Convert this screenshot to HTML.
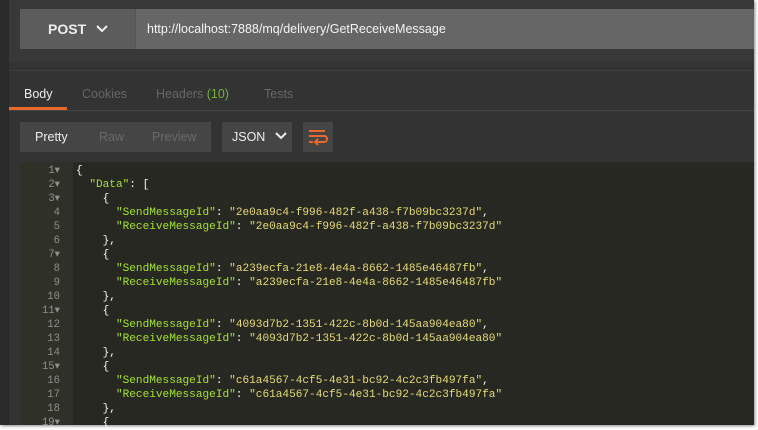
<!DOCTYPE html><html><head><style>
*{margin:0;padding:0;box-sizing:border-box}
body{width:758px;height:428px;background:#fff;position:relative;overflow:hidden;font-family:"Liberation Sans",sans-serif}
.main{position:absolute;left:0;top:0;width:754px;height:425px;background:#333;box-shadow:1px 1px 3px #888}
.strip{position:absolute;left:0;top:0;width:9px;height:425px;background:#2a2a2a}
.top{position:absolute;left:9px;top:0;width:745px;height:62px;background:#383838}
.method{position:absolute;left:20px;top:9px;width:115px;height:40px;background:#5c5c5c;color:#eee;font-weight:bold;font-size:14px;line-height:40px;padding-left:28px}
.url{position:absolute;left:135px;top:9px;width:619px;height:40px;background:#666;border-left:1px solid #555;color:#f4f4f4;font-size:12.5px;line-height:40px;padding-left:11px}
.tabs{position:absolute;left:9px;top:70px;width:745px;height:41px;border-top:1px solid #3d3d3d;border-bottom:1px solid #444;font-size:12.5px}
.tabs span{position:absolute;top:16px;color:#666}
.ul{position:absolute;left:9px;top:107px;width:58px;height:3px;background:#e8692c}
.btns{position:absolute;left:20px;top:122px;width:191px;height:30px;background:#454545;font-size:12.5px;line-height:30px}
.btns span{position:absolute;color:#6a6a6a}
.json{position:absolute;left:222px;top:122px;width:70px;height:30px;background:#454545;color:#eee;font-size:12.5px;line-height:30px;padding-left:10px}
.wrap{position:absolute;left:303px;top:122px;width:30px;height:30px;background:#454545}
.ed{position:absolute;left:20px;top:162px;width:734px;height:263px;background:#272822}
.gut{position:absolute;left:0;top:0;width:53px;height:263px;background:#2f3129}
pre{position:absolute;top:2px;font-family:"Liberation Mono",monospace;font-size:11.1px;line-height:14px}
.ln{left:0;width:40px;text-align:right;color:#8f908a;font-size:10.6px}
.code{left:56px;color:#f8f8f2}
.k{color:#a6e22e}.s{color:#e6db74}
</style></head><body>
<div class="main">
<div class="strip"></div><div class="top"></div>
<div class="method">POST <svg width="12" height="8" style="margin-left:6px;vertical-align:1px"><path d="M1 1L6 6L11 1" stroke="#eee" stroke-width="2" fill="none"/></svg></div>
<div class="url">http://localhost:7888/mq/delivery/GetReceiveMessage</div>
<div class="tabs"><span style="left:15px;color:#eee">Body</span><span style="left:73px">Cookies</span><span style="left:147px">Headers <b style="color:#71b43a;font-weight:normal">(10)</b></span><span style="left:255px">Tests</span></div>
<div class="ul"></div>
<div class="btns"><span style="left:15px;color:#eee">Pretty</span><span style="left:79px">Raw</span><span style="left:132px">Preview</span></div>
<div class="json">JSON <svg width="12" height="8" style="margin-left:6px;vertical-align:1px"><path d="M1 1L6 6L11 1" stroke="#eee" stroke-width="2" fill="none"/></svg></div>
<div class="wrap"><svg width="30" height="30"><path d="M6 9H22M6 14H21a3 3 0 0 1 0 6H13M6 20H10M15 17L12 20L15 23" stroke="#e8692c" stroke-width="2" fill="none"/></svg></div>
<div class="ed"><div class="gut"></div>
<pre class="ln">1▾
2▾
3▾
4
5
6
7▾
8
9
10
11▾
12
13
14
15▾
16
17
18
19▾</pre>
<pre class="code">{
  <span class="k">"Data"</span>: [
    {
      <span class="k">"SendMessageId"</span>: <span class="s">"2e0aa9c4-f996-482f-a438-f7b09bc3237d"</span>,
      <span class="k">"ReceiveMessageId"</span>: <span class="s">"2e0aa9c4-f996-482f-a438-f7b09bc3237d"</span>
    },
    {
      <span class="k">"SendMessageId"</span>: <span class="s">"a239ecfa-21e8-4e4a-8662-1485e46487fb"</span>,
      <span class="k">"ReceiveMessageId"</span>: <span class="s">"a239ecfa-21e8-4e4a-8662-1485e46487fb"</span>
    },
    {
      <span class="k">"SendMessageId"</span>: <span class="s">"4093d7b2-1351-422c-8b0d-145aa904ea80"</span>,
      <span class="k">"ReceiveMessageId"</span>: <span class="s">"4093d7b2-1351-422c-8b0d-145aa904ea80"</span>
    },
    {
      <span class="k">"SendMessageId"</span>: <span class="s">"c61a4567-4cf5-4e31-bc92-4c2c3fb497fa"</span>,
      <span class="k">"ReceiveMessageId"</span>: <span class="s">"c61a4567-4cf5-4e31-bc92-4c2c3fb497fa"</span>
    },
    {</pre>
</div>
</div>
</body></html>
